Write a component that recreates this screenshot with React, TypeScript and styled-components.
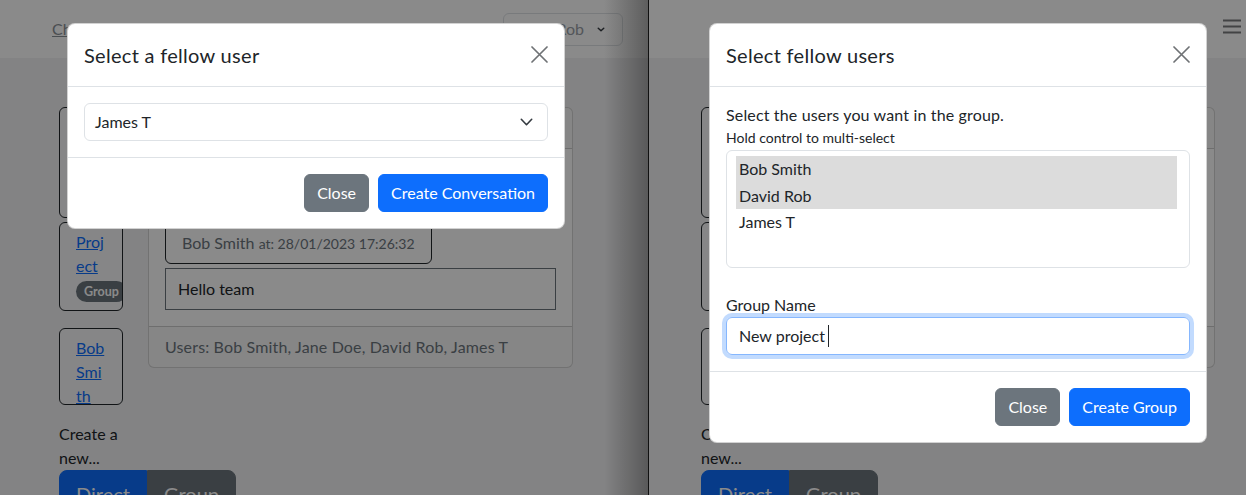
import React from "react";
import styled, { createGlobalStyle } from "styled-components";

const GlobalStyle = createGlobalStyle`
	* {
		box-sizing: border-box;
	}
	html,
	body {
		margin: 0;
		padding: 0;
		background: #fff;
	}
	body {
		font-family: Lato, "Open Sans", sans-serif;
		font-size: 16px;
		line-height: 1.5;
		color: #212529;
	}
`;

const Screen = styled.div`
	display: flex;
	width: 1246px;
	height: 495px;
	overflow: hidden;
`;

const Pane = styled.div<{ $width: number }>`
	position: relative;
	flex: 0 0 ${(p) => p.$width}px;
	height: 100%;
	overflow: hidden;
	background: #f2f3f4;
`;

const Divider = styled.div`
	flex: 0 0 1px;
	background: #111;
`;

const EdgeShadow = styled.div`
	position: absolute;
	top: 0;
	right: 0;
	bottom: 0;
	width: 44px;
	z-index: 3;
	background: linear-gradient(to right, rgba(0, 0, 0, 0), rgba(0, 0, 0, 0.32));
`;

const Backdrop = styled.div`
	position: absolute;
	inset: 0;
	z-index: 1;
	background: rgba(0, 0, 0, 0.46);
`;

/* ---------- page behind the modal ---------- */

const Navbar = styled.nav<{ $pad: string; $justify: string }>`
	height: 58px;
	display: flex;
	align-items: center;
	justify-content: ${(p) => p.$justify};
	padding: ${(p) => p.$pad};
	background: #fff;
`;

const NavLink = styled.a`
	color: #8a9097;
	text-decoration: underline;
	font-size: 16px;
`;

const UserDropdown = styled.button`
	display: flex;
	align-items: center;
	gap: 13px;
	height: 33px;
	padding: 0 17px 0 8px;
	border: 1px solid #dee2e6;
	border-radius: 6px;
	background: transparent;
	color: #9aa0a6;
	font: inherit;
`;

const Toggler = styled.button`
	border: 0;
	padding: 0;
	background: transparent;
	margin-bottom: 5px;
	display: flex;
`;

const Page = styled.div<{ $offset: number }>`
	padding: 49px 0 0 ${(p) => p.$offset}px;
`;

const Row = styled.div`
	display: flex;
	gap: 25px;
	width: 514px;
	align-items: flex-start;
`;

const SideColumn = styled.div`
	flex: 0 0 64px;
	width: 64px;
	display: flex;
	flex-direction: column;
`;

const ConvCard = styled.div<{ $mt: number; $height?: number }>`
	margin-top: ${(p) => p.$mt}px;
	height: ${(p) => (p.$height ? `${p.$height}px` : "auto")};
	padding: 7px 0 8px 16px;
	border: 1px solid #212529;
	border-radius: 6px;
	background: #f7f8f9;
	overflow: hidden;
`;

const ConvLink = styled.a`
	display: block;
	width: 30px;
	color: #0d6efd;
	text-decoration: underline;
	word-break: break-all;
`;

const Badge = styled.span`
	display: inline-block;
	margin-top: 3px;
	padding: 4px 8px;
	border-radius: 999px;
	background: #6c757d;
	color: #fff;
	font-size: 12.5px;
	font-weight: 700;
	line-height: 13px;
	white-space: nowrap;
`;

const Caption = styled.p`
	margin: 17px 0 0;
	line-height: 24px;
`;

const ButtonGroup = styled.div`
	display: inline-flex;
	white-space: nowrap;
`;

const LargeButton = styled.button<{ $variant: "primary" | "secondary"; $first?: boolean }>`
	padding: 8px 16px;
	font: inherit;
	font-size: 20px;
	line-height: 30px;
	color: #fff;
	border: 1px solid ${(p) => (p.$variant === "primary" ? "#0d6efd" : "#6c757d")};
	background: ${(p) => (p.$variant === "primary" ? "#0d6efd" : "#6c757d")};
	border-radius: ${(p) => (p.$first ? "8px 0 0 8px" : "0 8px 8px 0")};
`;

const ChatCard = styled.div`
	flex: 1;
	background: #fff;
	border: 1px solid rgba(0, 0, 0, 0.175);
	border-radius: 6px;
	overflow: hidden;
`;

const CardHeader = styled.div`
	padding: 8px 16px;
	background: rgba(33, 37, 41, 0.03);
	border-bottom: 1px solid rgba(0, 0, 0, 0.175);
`;

const CardBody = styled.div`
	padding: 16px;
	display: flex;
	flex-direction: column;
	align-items: flex-start;
`;

const MessageMeta = styled.div`
	margin-top: 16px;
	padding: 7px 16px;
	border: 1px solid #212529;
	border-radius: 6px;
	color: #6c757d;
	line-height: 24px;
	small {
		font-size: 14px;
	}
`;

const MessageText = styled.div<{ $mt: number }>`
	align-self: stretch;
	margin-top: ${(p) => p.$mt}px;
	padding: 8px 12px;
	border: 1px solid #6c757d;
	line-height: 24px;
`;

const CardFooter = styled.div`
	padding: 8px 16px;
	background: rgba(33, 37, 41, 0.03);
	border-top: 1px solid rgba(0, 0, 0, 0.175);
	color: #6c757d;
	letter-spacing: 0.15px;
`;

/* ---------- modal ---------- */

const ModalDialog = styled.div<{ $left: number }>`
	position: absolute;
	top: 23px;
	left: ${(p) => p.$left}px;
	z-index: 2;
	width: 498px;
	background: #fff;
	border: 1px solid rgba(0, 0, 0, 0.175);
	border-radius: 8px;
`;

const ModalHeader = styled.div`
	display: flex;
	align-items: center;
	justify-content: space-between;
	padding: 16px;
	border-bottom: 1px solid #dee2e6;
`;

const ModalTitle = styled.h5`
	margin: 0;
	font-size: 20px;
	font-weight: 400;
	line-height: 30px;
	letter-spacing: 0.3px;
`;

const CloseX = styled.button`
	display: flex;
	border: 0;
	padding: 0;
	margin-top: -2px;
	background: transparent;
`;

const ModalBody = styled.div`
	padding: 16px;
`;

const ModalFooter = styled.div`
	display: flex;
	justify-content: flex-end;
	gap: 9px;
	padding: 16px;
	border-top: 1px solid #dee2e6;
`;

const Button = styled.button<{ $variant: "primary" | "secondary" }>`
	padding: 6px 12px;
	font: inherit;
	line-height: 24px;
	color: #fff;
	border: 1px solid ${(p) => (p.$variant === "primary" ? "#0d6efd" : "#6c757d")};
	background: ${(p) => (p.$variant === "primary" ? "#0d6efd" : "#6c757d")};
	border-radius: 6px;
`;

const SelectBox = styled.div`
	display: flex;
	align-items: center;
	justify-content: space-between;
	height: 38px;
	padding: 0 14px 0 10px;
	border: 1px solid #dee2e6;
	border-radius: 6px;
`;

const Intro = styled.p`
	margin: 0;
	line-height: 24px;
	letter-spacing: 0.15px;
`;

const Hint = styled.div`
	margin-bottom: 2px;
	font-size: 14px;
	line-height: 21px;
`;

const ListBox = styled.div`
	height: 118px;
	padding: 5px 12px 5px 9px;
	border: 1px solid #dee2e6;
	border-radius: 6px;
`;

const ListOption = styled.div<{ $selected?: boolean }>`
	height: 26.5px;
	line-height: 26.5px;
	padding-left: 3px;
	background: ${(p) => (p.$selected ? "#dcdcdc" : "transparent")};
`;

const FieldLabel = styled.label`
	display: block;
	margin-top: 25px;
	line-height: 24px;
`;

const TextField = styled.div`
	display: flex;
	align-items: center;
	height: 38px;
	padding: 0 12px;
	border: 1px solid #86b7fe;
	border-radius: 6px;
	box-shadow: 0 0 0 4px rgba(13, 110, 253, 0.25);
`;

const Caret = styled.span`
	display: inline-block;
	width: 1px;
	height: 22px;
	margin-left: 3px;
	background: #212529;
`;

/* ---------- icons ---------- */

const XIcon = () => (
	<svg width="17" height="17" viewBox="0 0 17 17">
		<path d="M1 1 16 16M16 1 1 16" stroke="#6f7275" strokeWidth="1.7" strokeLinecap="round" />
	</svg>
);

const Chevron = ({ w, h, stroke }: { w: number; h: number; stroke: number }) => (
	<svg width={w} height={h} viewBox={`0 0 ${w} ${h}`}>
		<polyline
			points={`${stroke / 2 + 0.5},${stroke / 2 + 0.5} ${w / 2},${h - stroke / 2 - 0.5} ${w - stroke / 2 - 0.5},${stroke / 2 + 0.5}`}
			fill="none"
			stroke="#343a40"
			strokeWidth={stroke}
			strokeLinecap="round"
			strokeLinejoin="round"
		/>
	</svg>
);

const Hamburger = () => (
	<svg width="18" height="15" viewBox="0 0 18 15">
		<path d="M0 1.5h18M0 7.5h18M0 13.5h18" stroke="rgba(33,37,41,.6)" strokeWidth="2" />
	</svg>
);

/* ---------- composed parts ---------- */

const conversations = [
	{ id: 1, name: "Jane Doe", mt: 0, height: 111, group: false },
	{ id: 2, name: "Project", mt: 4, height: undefined, group: true },
	{ id: 3, name: "Bob Smith", mt: 17, height: 77, group: false },
];

const ChatPage = ({ offset }: { offset: number }) => (
	<Page $offset={offset}>
		<Row>
			<SideColumn>
				{conversations.map((c) => (
					<ConvCard key={c.id} $mt={c.mt} $height={c.height}>
						<ConvLink href="#">{c.name}</ConvLink>
						{c.group && <Badge>Group</Badge>}
					</ConvCard>
				))}
				<Caption>Create a new...</Caption>
				<ButtonGroup>
					<LargeButton $variant="primary" $first>
						Direct
					</LargeButton>
					<LargeButton $variant="secondary">Group</LargeButton>
				</ButtonGroup>
			</SideColumn>
			<ChatCard>
				<CardHeader>Project</CardHeader>
				<CardBody>
					<MessageText $mt={0}>Morning everyone</MessageText>
					<MessageMeta>
						Bob Smith <small>at: 28/01/2023 17:26:32</small>
					</MessageMeta>
					<MessageText $mt={4}>Hello team</MessageText>
				</CardBody>
				<CardFooter>Users: Bob Smith, Jane Doe, David Rob, James T</CardFooter>
			</ChatCard>
		</Row>
	</Page>
);

const DirectModal = () => (
	<ModalDialog $left={67}>
		<ModalHeader>
			<ModalTitle>Select a fellow user</ModalTitle>
			<CloseX aria-label="Close">
				<XIcon />
			</CloseX>
		</ModalHeader>
		<ModalBody>
			<SelectBox>
				<span>James T</span>
				<Chevron w={13} h={8} stroke={1.6} />
			</SelectBox>
		</ModalBody>
		<ModalFooter>
			<Button $variant="secondary">Close</Button>
			<Button $variant="primary">Create Conversation</Button>
		</ModalFooter>
	</ModalDialog>
);

const users = [
	{ name: "Bob Smith", selected: true },
	{ name: "David Rob", selected: true },
	{ name: "James T", selected: false },
];

const GroupModal = () => (
	<ModalDialog $left={60}>
		<ModalHeader>
			<ModalTitle>Select fellow users</ModalTitle>
			<CloseX aria-label="Close">
				<XIcon />
			</CloseX>
		</ModalHeader>
		<ModalBody>
			<Intro>Select the users you want in the group.</Intro>
			<Hint>Hold control to multi-select</Hint>
			<ListBox role="listbox">
				{users.map((u) => (
					<ListOption key={u.name} $selected={u.selected}>
						{u.name}
					</ListOption>
				))}
			</ListBox>
			<FieldLabel>Group Name</FieldLabel>
			<TextField>
				New project
				<Caret />
			</TextField>
		</ModalBody>
		<ModalFooter>
			<Button $variant="secondary">Close</Button>
			<Button $variant="primary">Create Group</Button>
		</ModalFooter>
	</ModalDialog>
);

export default function App() {
	return (
		<>
			<GlobalStyle />
			<Screen>
				<Pane $width={648}>
					<Navbar $pad="0 25px 0 52px" $justify="space-between">
						<NavLink href="#">Chats</NavLink>
						<UserDropdown>
							David Rob
							<Chevron w={8} h={5} stroke={1.5} />
						</UserDropdown>
					</Navbar>
					<ChatPage offset={59} />
					<Backdrop />
					<DirectModal />
					<EdgeShadow />
				</Pane>
				<Divider />
				<Pane $width={597}>
					<Navbar $pad="0 5px 0 0" $justify="flex-end">
						<Toggler aria-label="Toggle navigation">
							<Hamburger />
						</Toggler>
					</Navbar>
					<ChatPage offset={52} />
					<Backdrop />
					<GroupModal />
				</Pane>
			</Screen>
		</>
	);
}
